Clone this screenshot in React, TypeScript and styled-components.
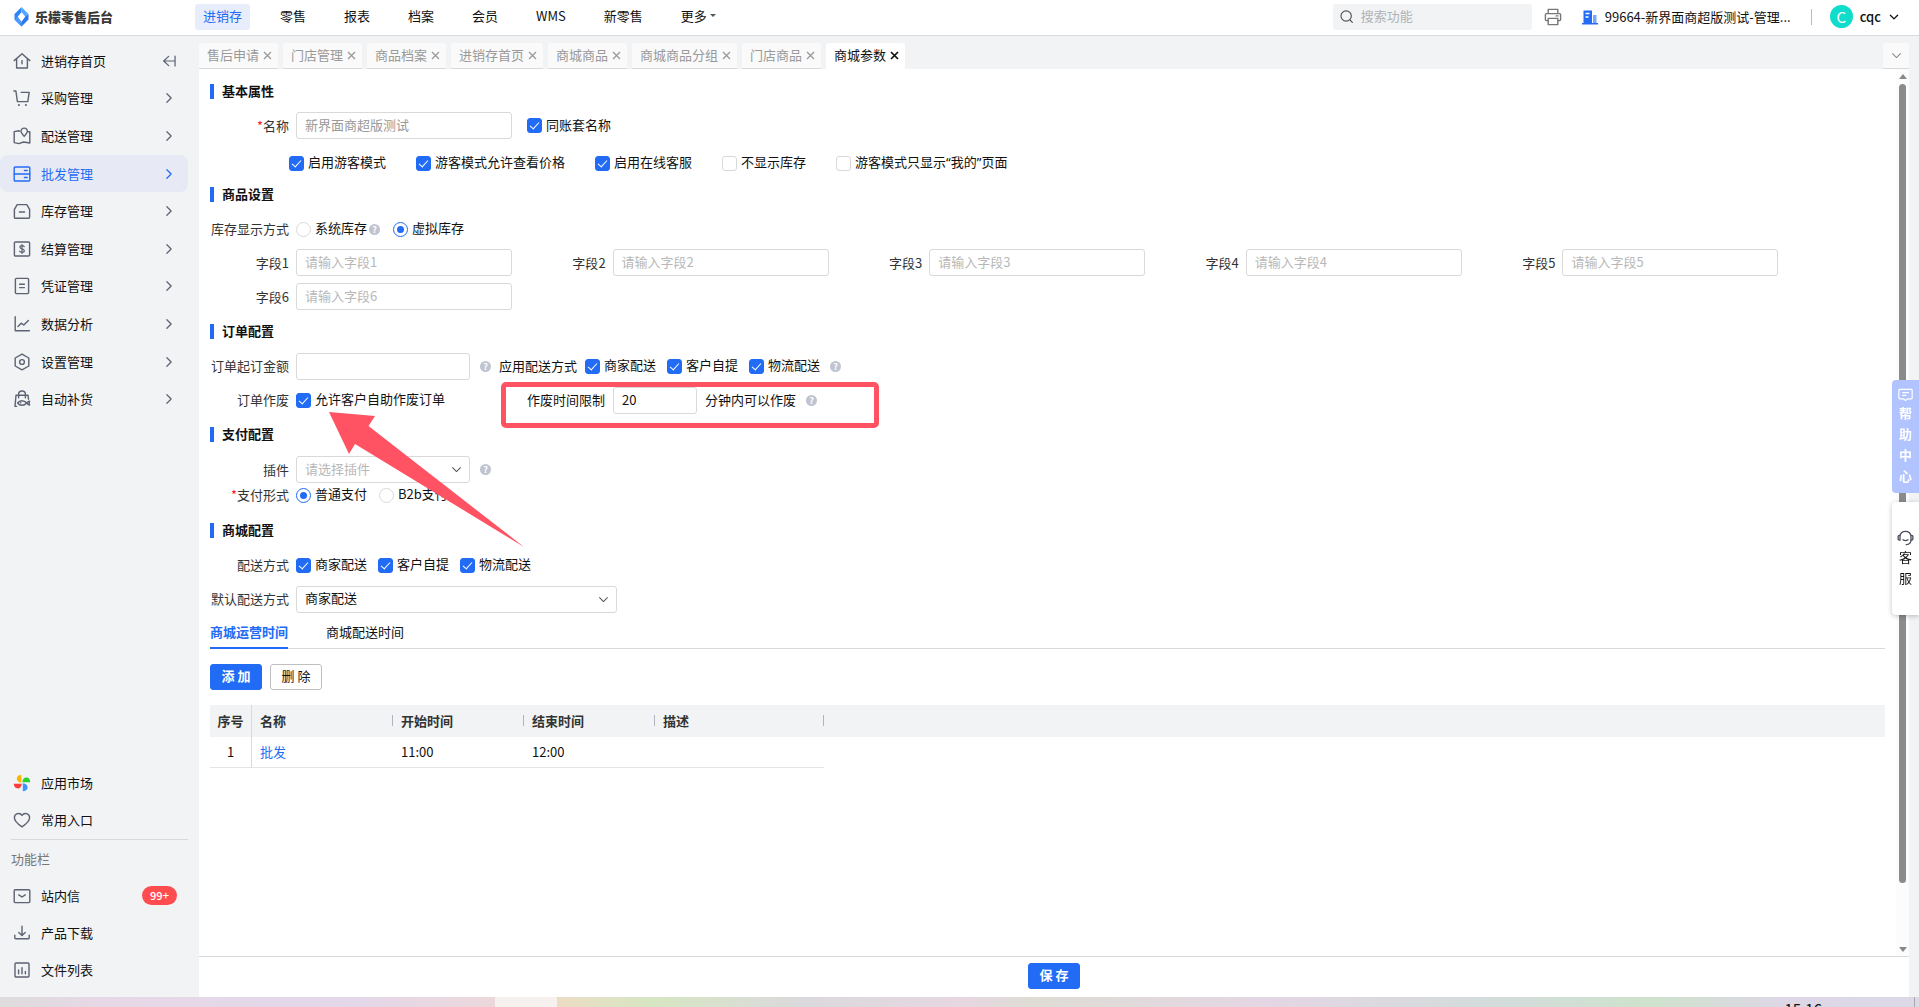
import React, { useState } from "react";
import styled, { createGlobalStyle, css } from "styled-components";

const blue = "#226cf5";
const ink = "#111111";
const line = "#d9d9d9";
const panelGrey = "#f1f3f5";
const iconGrey = "#5f6273";

const GlobalStyle = createGlobalStyle`
  *, *::before, *::after { box-sizing: border-box; }
  body { margin: 0; }
  body, button, input, select, table {
    font-family: "Noto Sans CJK SC", "Liberation Sans", sans-serif;
    font-size: 13px;
    line-height: 20px;
    color: ${ink};
  }
  button { padding: 0; border: 0; background: none; cursor: pointer; }
  a { color: inherit; text-decoration: none; }
`;

/* ---------- icons ---------- */

const Svg = styled.svg<{ $size: number }>`
  display: block;
  flex: none;
  width: ${(p) => p.$size}px;
  height: ${(p) => p.$size}px;
  fill: none;
  stroke: currentColor;
  stroke-width: 1.4;
  stroke-linecap: round;
  stroke-linejoin: round;
`;

const icons = {
  home: (
    <>
      <path d="M1.2 8.6 9 1.8l7.8 6.8" />
      <path d="M3.6 7v9h10.8V7" />
      <path d="M9 8.6v3.2" />
    </>
  ),
  cart: (
    <>
      <path d="M.9 2h2l1.5 10.6h10.4l1.4-9.2H8.2" />
      <path d="M5.8 16h.2M12.8 16h.2" strokeWidth="1.8" />
    </>
  ),
  map: (
    <>
      <path d="M6.6 4.2 5.6 3.8 1.2 4.6v11l4.6 1 4.8-1.6 6.2 1V4.8h-1.4" />
      <path d="M11.2 9.4C9 7 8 5.7 8 4.3a3.2 3.2 0 0 1 6.4 0c0 1.4-1 2.7-3.2 5.1Z" />
    </>
  ),
  server: (
    <>
      <rect x="1.2" y="2" width="15.6" height="14" rx="1" />
      <path d="M1.2 9h15.6M11.4 5.5h2.8M11.4 12.5h2.8" />
    </>
  ),
  box: (
    <>
      <path d="M4.2 2.6h9.6l2.8 4.8v7.8a1 1 0 0 1-1 1H2.4a1 1 0 0 1-1-1V7.4z" />
      <path d="M6.4 10h5.2" />
    </>
  ),
  money: (
    <>
      <rect x="1.4" y="2" width="15.2" height="14" rx="1" />
      <path d="M11.2 6.7c-.5-.7-1.2-1-2.2-1-1.3 0-2.1.6-2.1 1.6 0 2.2 4.4 1.1 4.4 3.4 0 1-.9 1.6-2.3 1.6-1.1 0-1.9-.4-2.4-1.1M9 4.6v8.8" strokeWidth="1.2" />
    </>
  ),
  note: (
    <>
      <rect x="2.4" y="1.4" width="13.2" height="15.2" rx="1" />
      <path d="M6.6 7.3h4.8M6.6 10.6h4.8" />
    </>
  ),
  chart: (
    <>
      <path d="M2.2 1.6v14.2h14.2" />
      <path d="m5 11.6 3.2-3.4 2.6 1.8 4.6-4.6" />
    </>
  ),
  hexagon: (
    <>
      <path d="M9 1.2 15.8 5v8L9 16.8 2.2 13V5z" />
      <circle cx="9" cy="9" r="2.4" />
    </>
  ),
  bag: (
    <>
      <path d="M3.6 16.4H2L3 5.2h12l.5 4M5.6 7.8V4.4a3.4 3.4 0 0 1 6.8 0v3.4" />
      <path d="M4.6 13c2-3 6.6-3 9 0 1.2-1.4 2.2-1.8 3-1.8-.6 1.2-.6 2.4 0 3.8-.8 0-1.8-.6-3-2-2.4 3-7 3-9 0Z" />
      <path d="M7.6 12.8h.2" />
    </>
  ),
  heart: <path d="M9 15.8C4.3 12.6 1.4 9.9 1.4 6.7a4.1 4.1 0 0 1 7.6-2.2 4.1 4.1 0 0 1 7.6 2.2c0 3.2-2.9 5.9-7.6 9.1Z" />,
  mail: (
    <>
      <rect x="1.2" y="2.8" width="15.6" height="12.8" rx="1" />
      <path d="m5.8 7.8 3.2 2.2 3.2-2.2" />
    </>
  ),
  download: (
    <>
      <path d="M9 2.2v9M5.8 8.4 9 11.4l3.2-3" />
      <path d="M1.8 11.2v2.6a1 1 0 0 0 1 1h12.4a1 1 0 0 0 1-1v-2.6" />
    </>
  ),
  bars: (
    <>
      <rect x="2" y="2" width="14" height="14" rx="1" />
      <path d="M5.6 9v3.8M9 6.6v6.2M12.4 10.4v2.4" />
    </>
  ),
  right: <path d="m6.6 4.2 4.8 4.8-4.8 4.8" />,
  down: <path d="m3.6 6.4 5.4 5.4 5.4-5.4" />,
  collapse: <path d="M15.8 3.4v11.2M15.8 9H3.6M8.6 3.800 3 9l5.600 5.200" />,
  search: (
    <>
      <circle cx="8.6" cy="8.4" r="6.2" />
      <path d="m13.2 13.2 2.8 2.8" />
    </>
  ),
  printer: (
    <>
      <path d="M4.2 5.6V1.4h9.6v4.2M4.2 12.6H2.4a1 1 0 0 1-1-1V6.6a1 1 0 0 1 1-1h13.2a1 1 0 0 1 1 1v5a1 1 0 0 1-1 1h-1.8" />
      <rect x="4.2" y="10.4" width="9.6" height="6.2" />
      <path d="M12.2 7.9h1.8" />
    </>
  ),
  chat: (
    <>
      <path d="M2 2.8h14a1 1 0 0 1 1 1v9.4a1 1 0 0 1-1 1h-4.6L9 16.2l-2.4-2H2a1 1 0 0 1-1-1V3.8a1 1 0 0 1 1-1Z" />
      <path d="M5.6 6.8h7M5.6 10h4" />
    </>
  ),
  headset: (
    <>
      <path d="M3.2 7.4a5.9 5.9 0 0 1 11.6 0M3.2 6.8H2.4a1.2 1.2 0 0 0-1.2 1.2v2.6a1.2 1.2 0 0 0 1.2 1.2h.8zM14.8 6.8h.8A1.2 1.2 0 0 1 16.8 8v2.6a1.2 1.2 0 0 1-1.2 1.2h-.8z" />
      <path d="M14.8 11.8c0 2.6-1.8 4.4-5 4.8M6.4 11.4c1.6 1.2 3.6 1.2 5.2 0" />
    </>
  ),
};

type IconName = keyof typeof icons;

const Icon = ({ name, size = 18 }: { name: IconName; size?: number }) => (
  <Svg viewBox="0 0 18 18" $size={size} aria-hidden="true">
    {icons[name]}
  </Svg>
);

const Logo = () => (
  <svg width="15" height="20" viewBox="0 0 15 20" aria-hidden="true">
    <path d="M7.5 0 .5 7v5.4l3.400 3.600V9.600L7.500 5.400z" fill="#2f86fb" />
    <path d="M7.500 0l7 7-3.400 2.600-3.600-4.200z" fill="#55a8ff" />
    <path d="M14.500 7v5.400L7.500 19.500l-3.600-3.500 3.600-1.600 3.600-4.800z" fill="#2b78f3" />
    <path d="M3.900 9.600 7.500 14.400v5.100L.5 12.400z" fill="#4b9bfd" />
    <path d="m7.500 5.200 3.500 4.500-3.500 4.900L4 9.700z" fill="#fff" />
  </svg>
);

const Pinwheel = () => (
  <svg width="18" height="18" viewBox="0 0 18 18" aria-hidden="true">
    <path d="M8.3 8.6C4.7 8.2 3.4 5.6 4 3.4 4.6 1.6 6.2.9 8.3 1z" fill="#ffb400" />
    <path d="M9.3 8.2C9.6 4.6 11.6 3 14.2 3.6 16.4 4.2 17.2 6 17.2 8.2z" fill="#2bd22e" />
    <path d="M9.8 9.3c3.4.4 5.2 2.5 4.6 4.9-.6 2-2.4 3-4.6 3z" fill="#3b94ff" />
    <path d="M8.8 9.7c-.4 3.5-2.3 5.2-4.8 4.6C1.9 13.8.9 12 .8 9.7z" fill="#ff3b3b" />
  </svg>
);

const Building = () => (
  <svg width="16" height="16" viewBox="0 0 16 16" aria-hidden="true">
    <path d="M1.5 1.500h8.500V14H1.500z" fill={blue} />
    <path d="M11 6h3.500v8H11z" fill="#7ba7fb" />
    <path d="M0 14h16v1.500H0z" fill={blue} />
    <path d="M3.500 4.500h4M3.500 8h3" stroke="#fff" strokeWidth="1.300" />
  </svg>
);

/* ---------- page frame ---------- */

const Page = styled.div`
  display: flex;
  flex-direction: column;
  height: 100vh;
  overflow: hidden;
  background: ${panelGrey};
`;

const Header = styled.header`
  display: flex;
  align-items: center;
  height: 36px;
  flex: none;
  padding: 0 19px 2px 14px;
  background: #fff;
  border-bottom: 1px solid ${line};
`;

const Brand = styled.a`
  display: flex;
  align-items: center;
  gap: 6px;
  width: 181px;
  font-weight: 900;
  color: #3a3a3a;
`;

const TopNav = styled.nav`
  display: flex;
  gap: 22px;
`;

const TopLink = styled.a<{ $active?: boolean }>`
  display: flex;
  align-items: center;
  gap: 3px;
  height: 26px;
  padding: 0 8px 2px;
  border-radius: 3px;
  ${(p) => p.$active && css`
    color: ${blue};
    background: #e8edfb;
  `}
`;

const Caret = styled.i`
  border: 3px solid transparent;
  border-top-color: #555;
  border-bottom-width: 0;
`;

const Search = styled.label`
  display: flex;
  align-items: center;
  gap: 7px;
  width: 199px;
  height: 26px;
  margin-left: auto;
  padding: 0 6px;
  border-radius: 3px;
  color: #555;
  background: ${panelGrey};
  input {
    flex: 1;
    min-width: 0;
    padding: 0 0 2px;
    border: 0;
    outline: 0;
    background: none;
  }
  input::placeholder { color: #b0b3b8; opacity: 1; }
`;

const HeaderButton = styled.button`
  margin: 0 20px 0 12px;
  color: #777;
`;

const Account = styled.a`
  display: flex;
  align-items: center;
  gap: 7px;
  padding-right: 20px;
  border-right: 1px solid #bbb;
  line-height: 13px;
`;

const User = styled.button`
  display: flex;
  align-items: center;
  gap: 7px;
  margin-left: 18px;
  font-weight: 500;
  svg { stroke-width: 2; }
`;

const Avatar = styled.span`
  width: 23px;
  height: 23px;
  border-radius: 50%;
  color: #fff;
  font-size: 15px;
  font-weight: 400;
  line-height: 23px;
  text-align: center;
  background: #0fdccb;
`;

const Body = styled.div`
  display: flex;
  flex: 1;
  min-height: 0;
`;

/* ---------- sidebar ---------- */

const Sidebar = styled.aside`
  display: flex;
  flex-direction: column;
  flex: none;
  width: 199px;
  padding: 6px 11px 8px 0;
`;

const SideGroup = styled.nav<{ $height: number }>`
  display: grid;
  grid-auto-rows: 1fr;
  height: ${(p) => p.$height}px;
`;

const SideLink = styled.a<{ $active?: boolean }>`
  display: flex;
  align-items: center;
  gap: 10px;
  padding: 0 11px 0 13px;
  border-radius: 8px;
  color: ${(p) => (p.$active ? blue : ink)};
  background: ${(p) => (p.$active ? "#e7eaf5" : "transparent")};
  svg { color: ${(p) => (p.$active ? blue : iconGrey)}; }
`;

const SideEnd = styled.span`
  margin-left: auto;
`;

const Badge = styled.span`
  margin-left: auto;
  width: 35px;
  border-radius: 10px;
  color: #fff;
  font-size: 11px;
  font-weight: 500;
  line-height: 19px;
  text-align: center;
  background: #ff4d4f;
`;

const Spacer = styled.div`
  flex: 1;
`;

const SideCaption = styled.div`
  margin-left: 11px;
  border-top: 1px solid ${line};
  color: #777;
  line-height: 37px;
`;

/* ---------- workspace ---------- */

const Workspace = styled.main`
  display: flex;
  flex-direction: column;
  flex: 1;
  min-width: 0;
  padding: 7px 10px 0 0;
`;

const TabStrip = styled.div`
  display: flex;
  gap: 5px;
  height: 26px;
  flex: none;
`;

const PageTab = styled.div<{ $active?: boolean }>`
  display: flex;
  align-items: center;
  gap: 3px;
  padding: 0 5px 0 8px;
  border-radius: 3px 3px 0 0;
  border-bottom: 1px solid ${(p) => (p.$active ? "#fff" : line)};
  color: ${(p) => (p.$active ? ink : "#999")};
  background: ${(p) => (p.$active ? "#fff" : "#fafafa")};
  button { width: 11px; color: inherit; }
  svg { stroke-width: ${(p) => (p.$active ? 1.7 : 1.3)}; }
`;

const TabName = styled.span`
  padding-bottom: 1px;
`;

const MoreTabs = styled.button`
  display: flex;
  align-items: center;
  justify-content: center;
  width: 26px;
  margin-left: auto;
  border-radius: 3px 3px 0 0;
  border-bottom: 1px solid ${line};
  color: #888;
  background: #fafafa;
`;

const Viewport = styled.div`
  display: flex;
  flex: 1;
  min-height: 0;
  background: #fff;
`;

const Form = styled.form`
  position: relative;
  flex: 1;
  min-width: 0;
  padding: 10px 11px 0;
  overflow: hidden;
`;

const Scroller = styled.div`
  display: flex;
  flex-direction: column;
  align-items: center;
  width: 13px;
  padding: 5px 0 4px;
  background: #fcfcfc;
`;

const ScrollArrow = styled.i<{ $down?: boolean }>`
  border: 4px solid transparent;
  ${(p) => p.$down
    ? css`border-top: 5px solid #888; border-bottom: 0; margin-top: auto;`
    : css`border-bottom: 5px solid #888; border-top: 0;`}
`;

const Thumb = styled.div`
  width: 7px;
  height: 91%;
  margin-top: 5px;
  border-radius: 4px;
  background: #8b8b8b;
`;

const Footer = styled.footer`
  display: flex;
  justify-content: center;
  flex: none;
  height: 41px;
  padding-top: 6px;
  border-top: 1px solid ${line};
  background: #fff;
`;

/* ---------- form parts ---------- */

const SectionTitle = styled.h2<{ $top?: number }>`
  display: flex;
  align-items: center;
  gap: 8px;
  height: 24px;
  margin: ${(p) => p.$top ?? 0}px 0 0;
  font-size: 13px;
  font-weight: 700;
  &::before {
    content: "";
    width: 4px;
    height: 15px;
    background: ${blue};
  }
`;

const Row = styled.div<{ $top?: number; $height?: number; $indent?: boolean }>`
  display: flex;
  align-items: center;
  height: ${(p) => p.$height ?? 24}px;
  margin-top: ${(p) => p.$top ?? 0}px;
  padding-left: ${(p) => (p.$indent ? 79 : 0)}px;
`;

const labelStyle = css<{ $required?: boolean }>`
  flex: none;
  width: 79px;
  margin-right: 7px;
  color: #333;
  text-align: right;
  ${(p) => p.$required && css`
    &::before { content: "*"; color: #f5222d; }
  `}
`;

const Label = styled.label<{ $required?: boolean }>`
  ${labelStyle}
`;

const LabelText = styled.span<{ $required?: boolean }>`
  ${labelStyle}
`;

const InlineText = styled.label<{ $left?: number }>`
  margin: 0 8px 0 ${(p) => p.$left ?? 0}px;
`;

const TextBox = styled.input<{ $width?: number }>`
  width: ${(p) => p.$width ?? 216}px;
  height: 27px;
  padding: 0 8px 2px;
  border: 1px solid ${line};
  border-radius: 3px;
  background: #fff;
  outline: 0;
  &::placeholder { color: #b8b8b8; opacity: 1; }
  &:disabled { color: #999; }
`;

const SelectFrame = styled.span<{ $width: number }>`
  position: relative;
  width: ${(p) => p.$width}px;
  svg {
    position: absolute;
    top: 7px;
    right: 7px;
    color: #555;
    pointer-events: none;
  }
`;

const SelectBox = styled.select<{ $muted?: boolean }>`
  display: block;
  width: 100%;
  height: 27px;
  padding: 0 8px 2px;
  border: 1px solid ${line};
  border-radius: 3px;
  appearance: none;
  outline: 0;
  color: ${(p) => (p.$muted ? "#b8b8b8" : ink)};
  background: #fff;
`;

const Options = styled.div<{ $gap: number; $left?: number }>`
  display: flex;
  align-items: center;
  gap: ${(p) => p.$gap}px;
  margin-left: ${(p) => p.$left ?? 0}px;
`;

const Choice = styled.label`
  display: flex;
  align-items: center;
  gap: 4px;
  white-space: nowrap;
  input {
    display: grid;
    place-content: center;
    flex: none;
    width: 15px;
    height: 15px;
    margin: 0;
    appearance: none;
    border: 1px solid ${line};
    background: #fff;
  }
  input[type="checkbox"] { border-radius: 3px; }
  input[type="checkbox"]:checked { border-color: ${blue}; background: ${blue}; }
  input[type="checkbox"]:checked::after {
    content: "";
    width: 5px;
    height: 9px;
    margin-bottom: 2px;
    border: solid #fff;
    border-width: 0 1px 1px 0;
    transform: rotate(42deg);
  }
  input[type="radio"] { border-radius: 50%; }
  input[type="radio"]:checked { border-color: ${blue}; }
  input[type="radio"]:checked::after {
    content: "";
    width: 7px;
    height: 7px;
    border-radius: 50%;
    background: ${blue};
  }
`;

const ChoiceText = styled.span`
  padding-bottom: 2px;
`;

const Quote = styled.span`
  font-family: "Noto Sans", "Open Sans", sans-serif;
`;

const HelpMark = styled.span<{ $left?: number; $right?: number }>`
  flex: none;
  width: 11px;
  height: 11px;
  margin: 0 ${(p) => p.$right ?? 0}px 0 ${(p) => p.$left ?? 10}px;
  border-radius: 50%;
  color: #fff;
  font-size: 9px;
  font-weight: 700;
  line-height: 11px;
  text-align: center;
  background: #c0c4d0;
`;

const FieldGrid = styled.div`
  display: grid;
  grid-template-columns: repeat(5, 1fr);
  row-gap: 7px;
  margin-top: 8px;
  padding-right: 92px;
`;

const Field = styled.div`
  display: flex;
  align-items: center;
`;

const SubTabs = styled.div`
  display: flex;
  gap: 38px;
  height: 29px;
  margin-top: 8px;
  border-bottom: 1px solid ${line};
`;

const SubTab = styled.button<{ $active?: boolean }>`
  height: 29px;
  padding-bottom: 3px;
  border-bottom: 2px solid ${(p) => (p.$active ? blue : "transparent")};
  color: ${(p) => (p.$active ? blue : ink)};
  font-weight: ${(p) => (p.$active ? 700 : 400)};
`;

const Actions = styled.div`
  display: flex;
  gap: 8px;
  margin: 15px 0;
`;

const ActionButton = styled.button<{ $primary?: boolean }>`
  width: 52px;
  height: 26px;
  padding-bottom: 2px;
  border: 1px solid ${(p) => (p.$primary ? blue : "#bfbfbf")};
  border-radius: 3px;
  color: ${(p) => (p.$primary ? "#fff" : ink)};
  font-weight: ${(p) => (p.$primary ? 700 : 400)};
  background: ${(p) => (p.$primary ? blue : "#fff")};
`;

const Table = styled.table`
  width: 100%;
  table-layout: fixed;
  border-collapse: separate;
  border-spacing: 0;
  th, td {
    position: relative;
    padding: 0 8px;
    text-align: left;
  }
  th {
    height: 32px;
    font-weight: 700;
    color: #333;
    background: ${panelGrey};
  }
  td { height: 31px; border-bottom: 1px solid #e4e4e4; }
  td:last-child { border-bottom: 0; }
  th:first-child, td:first-child {
    padding: 0;
    text-align: center;
    border-right: 1px solid ${line};
  }
  th:not(:first-child):not(:last-child)::after {
    content: "";
    position: absolute;
    top: 10px;
    right: 0;
    width: 1px;
    height: 11px;
    background: #b0b3bd;
  }
  a { color: ${blue}; }
`;

const Col = styled.col<{ $width?: number }>`
  width: ${(p) => (p.$width ? `${p.$width}px` : "auto")};
`;

/* ---------- floating parts ---------- */

const Highlight = styled.div`
  position: absolute;
  left: 302px;
  top: 313px;
  width: 378px;
  height: 46px;
  border: 5px solid #ff5263;
  border-radius: 5px;
  pointer-events: none;
`;

const Pointer = styled.svg`
  position: absolute;
  left: 130px;
  top: 343px;
  fill: #ff5263;
  pointer-events: none;
`;

const Dock = styled.div`
  position: fixed;
  right: 0;
  top: 380px;
  display: flex;
  flex-direction: column;
  gap: 9px;
`;

const DockButton = styled.button<{ $tone: "help" | "service" }>`
  display: flex;
  flex-direction: column;
  align-items: center;
  justify-content: center;
  width: 27px;
  height: 113px;
  border-radius: 4px 0 0 4px;
  line-height: 21px;
  ${(p) => p.$tone === "help"
    ? css`color: #fff; font-weight: 700; background: #b2c4ff;`
    : css`background: #fff; box-shadow: 0 1px 5px rgba(0, 0, 0, 0.25); svg { color: #4a4d5c; }`}
  span { width: 13px; }
`;

const Taskbar = styled.div`
  display: flex;
  justify-content: flex-end;
  flex: none;
  height: 10px;
  padding-right: 4px;
  overflow: hidden;
  background:
    linear-gradient(90deg, transparent 25.8%, #f6f1ee 25.8%, #f6f1ee 29%, transparent 29%),
    linear-gradient(90deg, #dedcdc 0, #e6d8e6 5%, #e3d7ea 18%, #ecd8db 25.8%, #ecdcc4 29%, #d6e6c2 34%, #dbd9dd 42%, #e6d7e2 50%, #dedcd4 54%, #e4d6e4 66%, #d2dcdb 78%, #cfe2cc 86%, #ddd7e6 93%, #dcd8e8 100%);
`;

const Clock = styled.time`
  height: 20px;
  padding-right: 92px;
  border-right: 1px solid #aaa;
  font-size: 15px;
  line-height: 24px;
`;

/* ---------- data ---------- */

const topLinks = ["进销存", "零售", "报表", "档案", "会员", "WMS", "新零售"];

const sideLinks: { icon: IconName; text: string }[] = [
  { icon: "home", text: "进销存首页" },
  { icon: "cart", text: "采购管理" },
  { icon: "map", text: "配送管理" },
  { icon: "server", text: "批发管理" },
  { icon: "box", text: "库存管理" },
  { icon: "money", text: "结算管理" },
  { icon: "note", text: "凭证管理" },
  { icon: "chart", text: "数据分析" },
  { icon: "hexagon", text: "设置管理" },
  { icon: "bag", text: "自动补货" },
];

const pageTabs = ["售后申请", "门店管理", "商品档案", "进销存首页", "商城商品", "商城商品分组", "门店商品", "商城参数"];

const deliveryWays = ["商家配送", "客户自提", "物流配送"];

type ChoiceProps = { children: React.ReactNode; on?: boolean };

const Check = ({ children, on = true }: ChoiceProps) => (
  <Choice>
    <input type="checkbox" defaultChecked={on} />
    <ChoiceText>{children}</ChoiceText>
  </Choice>
);

const Radio = ({ children, group, on = false }: ChoiceProps & { group: string }) => (
  <Choice>
    <input type="radio" name={group} defaultChecked={on} />
    <ChoiceText>{children}</ChoiceText>
  </Choice>
);

const DeliveryChecks = () => (
  <Options $gap={11}>
    {deliveryWays.map((text) => <Check key={text}>{text}</Check>)}
  </Options>
);

const Close = () => (
  <svg width="11" height="11" viewBox="0 0 11 11" stroke="currentColor" fill="none" aria-hidden="true">
    <path d="m2 2 7 7M9 2 2 9" />
  </svg>
);

export default function App() {
  const [subTab, setSubTab] = useState("商城运营时间");

  return (
    <Page>
      <GlobalStyle />
      <Header>
        <Brand href="#">
          <Logo />
          乐檬零售后台
        </Brand>
        <TopNav>
          {topLinks.map((text, i) => (
            <TopLink key={text} href="#" $active={i === 0}>{text}</TopLink>
          ))}
          <TopLink href="#">更多<Caret /></TopLink>
        </TopNav>
        <Search>
          <Icon name="search" size={15} />
          <input type="search" placeholder="搜索功能" aria-label="搜索功能" />
        </Search>
        <HeaderButton type="button" aria-label="打印"><Icon name="printer" /></HeaderButton>
        <Account href="#"><Building />99664-新界面商超版测试-管理...</Account>
        <User type="button"><Avatar>C</Avatar>cqc<Icon name="down" size={12} /></User>
      </Header>

      <Body>
        <Sidebar>
          <SideGroup $height={376}>
            {sideLinks.map(({ icon, text }, i) => (
              <SideLink key={text} href="#" $active={icon === "server"}>
                <Icon name={icon} />
                {text}
                <SideEnd><Icon name={i === 0 ? "collapse" : "right"} size={16} /></SideEnd>
              </SideLink>
            ))}
          </SideGroup>
          <Spacer />
          <SideGroup $height={75}>
            <SideLink href="#"><Pinwheel />应用市场</SideLink>
            <SideLink href="#"><Icon name="heart" />常用入口</SideLink>
          </SideGroup>
          <SideCaption>功能栏</SideCaption>
          <SideGroup $height={112}>
            <SideLink href="#"><Icon name="mail" />站内信<Badge>99+</Badge></SideLink>
            <SideLink href="#"><Icon name="download" />产品下载</SideLink>
            <SideLink href="#"><Icon name="bars" />文件列表</SideLink>
          </SideGroup>
        </Sidebar>

        <Workspace>
          <TabStrip>
            {pageTabs.map((text) => (
              <PageTab key={text} $active={text === "商城参数"}>
                <TabName>{text}</TabName>
                <button type="button" aria-label={`关闭${text}`}><Close /></button>
              </PageTab>
            ))}
            <MoreTabs type="button" aria-label="更多标签"><Icon name="down" size={13} /></MoreTabs>
          </TabStrip>

          <Viewport>
            <Form onSubmit={(e) => e.preventDefault()}>
              <SectionTitle>基本属性</SectionTitle>
              <Row $top={9} $height={27}>
                <Label htmlFor="mall-name" $required>名称</Label>
                <TextBox id="mall-name" defaultValue="新界面商超版测试" disabled />
                <Options $gap={0} $left={15}><Check>同账套名称</Check></Options>
              </Row>
              <Row $top={12} $indent>
                <Options $gap={30}>
                  <Check>启用游客模式</Check>
                  <Check>游客模式允许查看价格</Check>
                  <Check>启用在线客服</Check>
                  <Check on={false}>不显示库存</Check>
                  <Check on={false}>游客模式只显示<Quote>“</Quote>我的<Quote>”</Quote>页面</Check>
                </Options>
              </Row>

              <SectionTitle $top={7}>商品设置</SectionTitle>
              <Row $top={11}>
                <LabelText>库存显示方式</LabelText>
                <Radio group="stock">系统库存</Radio>
                <HelpMark $left={2} $right={13}>?</HelpMark>
                <Radio group="stock" on>虚拟库存</Radio>
              </Row>
              <FieldGrid>
                {[1, 2, 3, 4, 5, 6].map((n) => (
                  <Field key={n}>
                    <Label htmlFor={`field-${n}`}>字段{n}</Label>
                    <TextBox id={`field-${n}`} placeholder={`请输入字段${n}`} />
                  </Field>
                ))}
              </FieldGrid>

              <SectionTitle $top={9}>订单配置</SectionTitle>
              <Row $top={10} $height={26}>
                <Label htmlFor="min-amount">订单起订金额</Label>
                <TextBox id="min-amount" $width={174} />
                <HelpMark $right={8}>?</HelpMark>
                <InlineText as="span">应用配送方式</InlineText>
                <DeliveryChecks />
                <HelpMark>?</HelpMark>
              </Row>
              <Row $top={8} $height={26}>
                <LabelText>订单作废</LabelText>
                <Check>允许客户自助作废订单</Check>
                <InlineText htmlFor="void-limit" $left={82}>作废时间限制</InlineText>
                <TextBox id="void-limit" $width={84} defaultValue="20" />
                <InlineText as="span" $left={8}>分钟内可以作废</InlineText>
                <HelpMark $left={2}>?</HelpMark>
              </Row>

              <SectionTitle $top={9}>支付配置</SectionTitle>
              <Row $top={10} $height={27}>
                <Label htmlFor="plugin">插件</Label>
                <SelectFrame $width={174}>
                  <SelectBox id="plugin" $muted><option>请选择插件</option></SelectBox>
                  <Icon name="down" size={13} />
                </SelectFrame>
                <HelpMark>?</HelpMark>
              </Row>
              <Row>
                <LabelText $required>支付形式</LabelText>
                <Options $gap={12}>
                  <Radio group="pay" on>普通支付</Radio>
                  <Radio group="pay">B2b支付</Radio>
                </Options>
              </Row>

              <SectionTitle $top={11}>商城配置</SectionTitle>
              <Row $top={11}>
                <LabelText>配送方式</LabelText>
                <DeliveryChecks />
              </Row>
              <Row $top={9} $height={26}>
                <Label htmlFor="default-way">默认配送方式</Label>
                <SelectFrame $width={321}>
                  <SelectBox id="default-way">
                    {deliveryWays.map((text) => <option key={text}>{text}</option>)}
                  </SelectBox>
                  <Icon name="down" size={13} />
                </SelectFrame>
              </Row>

              <SubTabs>
                {["商城运营时间", "商城配送时间"].map((text) => (
                  <SubTab key={text} type="button" $active={text === subTab} onClick={() => setSubTab(text)}>
                    {text}
                  </SubTab>
                ))}
              </SubTabs>
              <Actions>
                <ActionButton type="button" $primary>添 加</ActionButton>
                <ActionButton type="button">删 除</ActionButton>
              </Actions>
              <Table>
                <colgroup>
                  <Col $width={42} />
                  <Col $width={141} />
                  <Col $width={131} />
                  <Col $width={131} />
                  <Col $width={169} />
                  <Col />
                </colgroup>
                <thead>
                  <tr><th>序号</th><th>名称</th><th>开始时间</th><th>结束时间</th><th>描述</th><th /></tr>
                </thead>
                <tbody>
                  <tr><td>1</td><td><a href="#">批发</a></td><td>11:00</td><td>12:00</td><td /><td /></tr>
                </tbody>
              </Table>

              <Highlight />
              <Pointer width="195" height="136" viewBox="0 0 195 136" aria-hidden="true">
                <path d="M0 0 46 4 39.5 14 195 135 26 32 20 42z" />
              </Pointer>
            </Form>
            <Scroller>
              <ScrollArrow />
              <Thumb />
              <ScrollArrow $down />
            </Scroller>
          </Viewport>
          <Footer>
            <ActionButton type="button" $primary>保 存</ActionButton>
          </Footer>
        </Workspace>
      </Body>

      <Taskbar><Clock>15:16</Clock></Taskbar>

      <Dock>
        <DockButton type="button" $tone="help">
          <Icon name="chat" size={15} />
          <span>帮助中心</span>
        </DockButton>
        <DockButton type="button" $tone="service">
          <Icon name="headset" size={17} />
          <span>客服</span>
        </DockButton>
      </Dock>
    </Page>
  );
}
